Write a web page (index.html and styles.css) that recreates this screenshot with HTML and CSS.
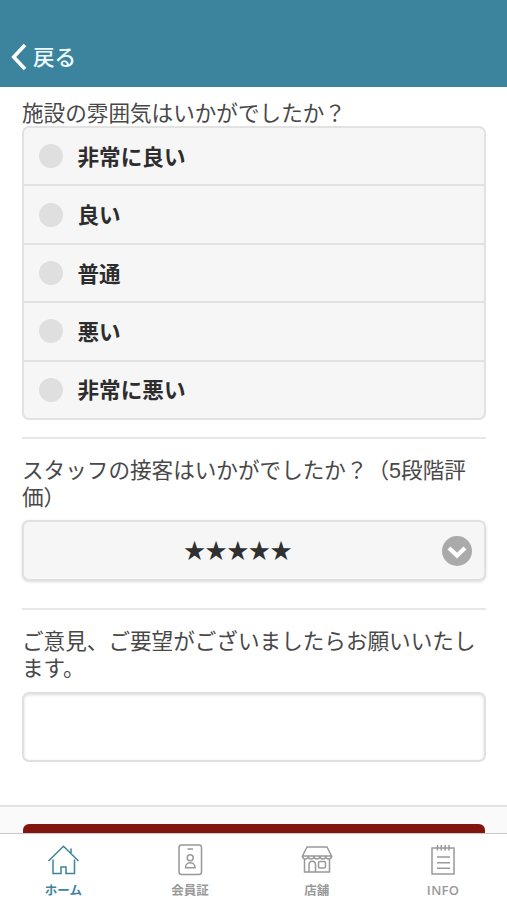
FILE: index.html
```html
<!DOCTYPE html>
<html lang="ja">
<head>
<meta charset="utf-8">
<meta name="viewport" content="width=device-width, initial-scale=1">
<title>アンケート</title>
<link rel="stylesheet" href="styles.css">
</head>
<body>
<div class="app">
  <header class="header">
    <a class="back">
      <svg class="back-icon" viewBox="0 0 16 28"><path d="M14 2 2.700 14 14 26"/></svg>
      <span>戻る</span>
    </a>
  </header>
  <main class="content">
    <section class="field">
      <p class="question">施設の雰囲気はいかがでしたか？</p>
      <div class="options">
        <div class="option"><span class="radio"></span><span class="label">非常に良い</span></div>
        <div class="option"><span class="radio"></span><span class="label">良い</span></div>
        <div class="option"><span class="radio"></span><span class="label">普通</span></div>
        <div class="option"><span class="radio"></span><span class="label">悪い</span></div>
        <div class="option"><span class="radio"></span><span class="label">非常に悪い</span></div>
      </div>
    </section>
    <section class="field rating">
      <p class="question">スタッフの接客はいかがでしたか？（5段階評価）</p>
      <div class="select">
        <span class="stars">★★★★★</span>
        <svg class="chevron" viewBox="0 0 30 30"><circle cx="15" cy="15" r="15"/><path d="m7 12 8 7.500 8-7.500"/></svg>
      </div>
    </section>
    <section class="field comments">
      <p class="question">ご意見、ご要望がございましたらお願いいたします。</p>
      <div class="textarea"></div>
    </section>
  </main>
  <div class="footer"><div class="submit"></div></div>
  <nav class="tabs">
    <a class="tab active">
      <svg viewBox="0 0 32 32"><path d="M1.500 17 16.500 2.200 31.500 17M6 15.500V29.500h8V23h5v6.500h8.500v-14M24 9V4.500"/></svg>
      <span>ホーム</span>
    </a>
    <a class="tab">
      <svg viewBox="0 0 32 32"><rect x="5" y="1" width="22.500" height="29.500" rx="2.500"/><path d="M13.500 5h5.500M11.500 23.700c0-6.500 9.500-6.500 9.500 0z"/><circle cx="16.200" cy="13.700" r="3"/></svg>
      <span>会員証</span>
    </a>
    <a class="tab">
      <svg viewBox="0 0 32 32"><path d="M6 3h20l4.500 9H1.500zM1.500 12c0 4 5.800 4 5.800 0 0 4 5.800 4 5.800 0 0 4 5.800 4 5.800 0 0 4 5.800 4 5.800 0 0 4 5.800 4 5.800 0M3.500 15.500V28h25V15.500M8 28v-7c0-5 6.500-5 6.500 0v7"/><rect x="17.500" y="17.500" width="7" height="6.500" rx="1.500"/></svg>
      <span>店舗</span>
    </a>
    <a class="tab info">
      <svg viewBox="0 0 32 32"><path d="M5 4h22v26H5zM10.500 1v5.500M14.300 1v5.500M18.100 1v5.500M22 1v5.500M10 13h13M10 18.700h13M10 24.300h13"/></svg>
      <span>INFO</span>
    </a>
  </nav>
</div>
</body>
</html>
```

FILE: styles.css
```css
* { box-sizing: border-box; }
body {
  margin: 0;
  background: #fff;
  color: #484848;
  font-family: "Liberation Sans", "Noto Sans CJK JP", sans-serif;
  font-size: 21.600px;
}
.app { display: flex; flex-direction: column; height: 900px; overflow: hidden; }
.header {
  flex: none;
  display: flex;
  align-items: flex-end;
  height: 87px;
  padding: 0 11px 15px;
  background: #3c849e;
}
.back { display: flex; align-items: center; gap: 6px; height: 30px; color: #eefaff; font-weight: 500; }
.back span { padding-bottom: 3px; }
.back-icon { width: 16px; height: 28px; fill: none; stroke: #fff; stroke-width: 3.600; }
.content { flex: none; height: 718px; padding: 13px 21.500px 0 22px; }
.question { margin: 0; line-height: 27px; }
.options {
  overflow: hidden;
  border: 2px solid #e2e2e2;
  border-radius: 7px;
  background: #f6f6f6;
  height: 294px;
  margin-top: -1px;
  display: flex;
  flex-direction: column;
}
.option {
  flex: 1;
  display: flex;
  align-items: center;
  gap: 15px;
  padding-left: 14.500px;
  color: #2d2d2d;
  font-weight: 700;
}
.option + .option { border-top: 2px solid #e2e2e2; }
.label { padding-bottom: 2px; }
.radio { width: 24px; height: 24px; border-radius: 50%; background: #dfdfdf; }
.rating { margin-top: 17px; padding-top: 18px; border-top: 2px solid #e7e7e7; }
.select {
  display: flex;
  align-items: center;
  height: 61px;
  margin-top: 9px;
  padding: 0 12px 0 22px;
  border: 2px solid #e0e0e0;
  border-radius: 7px;
  background: #f6f6f6;
  box-shadow: 0 1px 3px rgba(0, 0, 0, .15);
}
.stars { flex: 1; padding: 0 12px 5px 0; text-align: center; color: #303030; font-family: "Noto Sans CJK JP", sans-serif; font-weight: 700; }
.chevron { width: 30px; height: 30px; fill: #aaa; }
.chevron path { fill: none; stroke: #fff; stroke-width: 4.200; }
.comments { margin-top: 27px; padding-top: 18px; border-top: 2px solid #e7e7e7; }
.textarea {
  height: 70px;
  margin-top: 10px;
  border: 2px solid #e0e0e0;
  border-radius: 7px;
  background: #fff;
  box-shadow: inset 0 1px 3px rgba(0, 0, 0, .14);
}
.footer { flex: none; height: 28px; padding: 17px 22px 0 23px; border-top: 2px solid #e2e2e2; background: #fafafa; }
.submit { height: 10px; border-radius: 6px 6px 0 0; background: #82150f; }
.tabs { flex: 1; display: grid; grid-template-columns: repeat(4, 1fr); border-top: 1px solid #c8c8c8; background: #fff; }
.tab { display: flex; flex-direction: column; align-items: center; padding-top: 10px; color: #999; font-size: 12.500px; font-weight: 700; line-height: 18px; }
.tab svg { width: 32px; height: 32px; margin-bottom: 6px; fill: none; stroke: currentColor; stroke-width: 1.500; }
.active { color: #3c849e; }
.info { padding-right: 1px; font-family: "Open Sans", sans-serif; font-weight: 600; font-size: 13px; letter-spacing: .3px; }
.info svg { margin-bottom: 5px; }
```
